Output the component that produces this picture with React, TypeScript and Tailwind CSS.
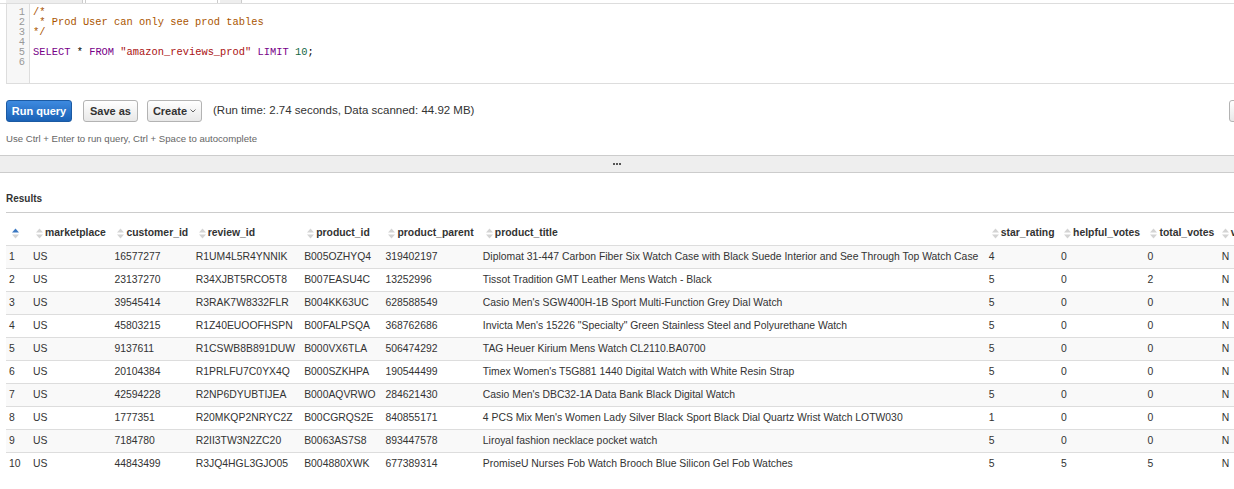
import React from "react";

const mono = { fontFamily: '"Liberation Mono", "DejaVu Sans Mono", monospace' };

const columns = [
  { key: "n", label: "", w: "w-[24px]" },
  { key: "marketplace", label: "marketplace", w: "w-[81px]" },
  { key: "customer_id", label: "customer_id", w: "w-[81px]" },
  { key: "review_id", label: "review_id", w: "w-[108px]" },
  { key: "product_id", label: "product_id", w: "w-[81px]" },
  { key: "product_parent", label: "product_parent", w: "w-[97px]" },
  { key: "product_title", label: "product_title", w: "w-[504px]" },
  { key: "star_rating", label: "star_rating", w: "w-[72px]" },
  { key: "helpful_votes", label: "helpful_votes", w: "w-[86px]" },
  { key: "total_votes", label: "total_votes", w: "w-[71px]" },
  { key: "vine", label: "vine", w: "w-[60px]" },
];

const rows = [
  ["1", "US", "16577277", "R1UM4L5R4YNNIK", "B005OZHYQ4", "319402197", "Diplomat 31-447 Carbon Fiber Six Watch Case with Black Suede Interior and See Through Top Watch Case", "4", "0", "0", "N"],
  ["2", "US", "23137270", "R34XJBT5RCO5T8", "B007EASU4C", "13252996", "Tissot Tradition GMT Leather Mens Watch - Black", "5", "0", "2", "N"],
  ["3", "US", "39545414", "R3RAK7W8332FLR", "B004KK63UC", "628588549", "Casio Men's SGW400H-1B Sport Multi-Function Grey Dial Watch", "5", "0", "0", "N"],
  ["4", "US", "45803215", "R1Z40EUOOFHSPN", "B00FALPSQA", "368762686", 'Invicta Men\'s 15226 "Specialty" Green Stainless Steel and Polyurethane Watch', "5", "0", "0", "N"],
  ["5", "US", "9137611", "R1CSWB8B891DUW", "B000VX6TLA", "506474292", "TAG Heuer Kirium Mens Watch CL2110.BA0700", "5", "0", "0", "N"],
  ["6", "US", "20104384", "R1PRLFU7C0YX4Q", "B000SZKHPA", "190544499", "Timex Women's T5G881 1440 Digital Watch with White Resin Strap", "5", "0", "0", "N"],
  ["7", "US", "42594228", "R2NP6DYUBTIJEA", "B000AQVRWO", "284621430", "Casio Men's DBC32-1A Data Bank Black Digital Watch", "5", "0", "0", "N"],
  ["8", "US", "1777351", "R20MKQP2NRYC2Z", "B00CGRQS2E", "840855171", "4 PCS Mix Men's Women Lady Silver Black Sport Black Dial Quartz Wrist Watch LOTW030", "1", "0", "0", "N"],
  ["9", "US", "7184780", "R2II3TW3N2ZC20", "B0063AS7S8", "893447578", "Liroyal fashion necklace pocket watch", "5", "0", "0", "N"],
  ["10", "US", "44843499", "R3JQ4HGL3GJO05", "B004880XWK", "677389314", "PromiseU Nurses Fob Watch Brooch Blue Silicon Gel Fob Watches", "5", "5", "5", "N"],
];

function SortIcon({ active }: { active?: boolean }) {
  return (
    <svg width="7" height="11" viewBox="0 0 7 11" className="shrink-0">
      <polygon points="0,4.5 3.5,0.5 7,4.5" fill={active ? "#3b78c2" : "#d4d4d4"} />
      <polygon points="0,6.5 3.5,10.5 7,6.5" fill="#d4d4d4" />
    </svg>
  );
}

function CodeEditor() {
  const lines: React.ReactNode[] = [
    <span className="text-[#aa5500]">/*</span>,
    <span className="text-[#aa5500]"> * Prod User can only see prod tables</span>,
    <span className="text-[#aa5500]">*/</span>,
    <span> </span>,
    <span>
      <span className="text-[#770088]">SELECT</span> * <span className="text-[#770088]">FROM</span>{" "}
      <span className="text-[#aa1111]">"amazon_reviews_prod"</span>{" "}
      <span className="text-[#770088]">LIMIT</span> <span className="text-[#116644]">10</span>;
    </span>,
    <span> </span>,
  ];
  return (
    <div className="ml-[6px] flex h-[80px] border-b border-l border-[#dddddd] bg-white" style={mono}>
      <div className="w-[23px] shrink-0 border-r border-[#dddddd] bg-[#f7f7f7] pt-[3px] pr-[4px] text-right text-[10.4px] leading-[10px] text-[#999999]">
        {lines.map((_, i) => (
          <div key={i}>{i + 1}</div>
        ))}
      </div>
      <div className="pt-[3px] pl-[3px] text-[10.4px] leading-[10px] whitespace-pre text-black">
        {lines.map((l, i) => (
          <div key={i}>{l}</div>
        ))}
      </div>
    </div>
  );
}

export default function App() {
  return (
    <div
      className="h-[489px] w-[1234px] overflow-hidden bg-white text-[#333333]"
      style={{ fontFamily: '"Liberation Sans", Arial, sans-serif' }}
    >
      {/* tab strip */}
      <div className="flex h-[4px] border-b border-[#dddddd] pl-[6px]">
        <div className="w-[77px] bg-[#eeeeee] border-r border-[#cccccc]" />
        <div className="ml-[2px] w-[133px] border-x border-[#cccccc] bg-white" />
        <div className="ml-[2px] w-[22px] bg-[#eeeeee] border-r border-[#cccccc]" />
      </div>

      <CodeEditor />

      {/* toolbar */}
      <div className="mt-[16px] flex h-[22px] items-center pl-[6px]">
        <button className="h-[22px] w-[66px] rounded-[3px] border border-[#1b5aa3] bg-gradient-to-b from-[#3d8ae0] to-[#1a62b6] text-[11px] font-bold text-white">
          Run query
        </button>
        <button className="ml-[11px] h-[22px] w-[55px] rounded-[3px] border border-[#b3b3b3] bg-gradient-to-b from-white to-[#e8e8e8] text-[11px] font-bold text-[#333333]">
          Save as
        </button>
        <button className="ml-[9px] flex h-[22px] w-[55px] items-center justify-center gap-[3px] rounded-[3px] border border-[#b3b3b3] bg-gradient-to-b from-white to-[#e8e8e8] text-[11px] font-bold text-[#333333]">
          Create
          <svg width="6" height="4" viewBox="0 0 6 4">
            <polyline points="0.5,0.5 3,3 5.5,0.5" fill="none" stroke="#555" strokeWidth="0.9" />
          </svg>
        </button>
        <span className="ml-[11px] text-[11.5px]">(Run time: 2.74 seconds, Data scanned: 44.92 MB)</span>
        <div className="ml-auto mr-[-36px] h-[22px] w-[41px] rounded-[3px] border border-[#b3b3b3] bg-gradient-to-b from-white to-[#e8e8e8]" />
      </div>

      <div className="mt-[11px] pl-[6px] text-[9.6px] leading-[12px] text-[#666666]">
        Use Ctrl + Enter to run query, Ctrl + Space to autocomplete
      </div>

      {/* splitter */}
      <div className="mt-[10px] flex h-[18px] items-center justify-center gap-[1px] border-y border-[#cccccc] bg-[#eeeeee]">
        <span className="h-[2px] w-[2px] bg-[#555555]" />
        <span className="h-[2px] w-[2px] bg-[#555555]" />
        <span className="h-[2px] w-[2px] bg-[#555555]" />
      </div>

      {/* results */}
      <div className="pl-[6px]">
        <div className="mt-[19px] border-b border-[#cccccc] pb-[6px] text-[10px] leading-[14px] font-bold">Results</div>
        <table className="mt-[9px] w-[1270px] table-fixed border-collapse text-[10.4px]">
          <colgroup>
            {columns.map((c) => (
              <col key={c.key} className={c.w} />
            ))}
          </colgroup>
          <thead>
            <tr className="h-[23px]">
              {columns.map((c, i) => (
                <th key={c.key} className="pl-[6px] text-left font-bold">
                  <div className="flex items-center gap-[2px] whitespace-nowrap">
                    <SortIcon active={i === 0} />
                    {c.label && <span>{c.label}</span>}
                  </div>
                </th>
              ))}
            </tr>
          </thead>
          <tbody>
            {rows.map((r, ri) => (
              <tr key={ri} className={`h-[23px] border-t border-[#dddddd] ${ri % 2 === 0 ? "bg-[#f9f9f9]" : "bg-white"}`}>
                {r.map((v, ci) => (
                  <td key={ci} className={`whitespace-nowrap ${ci === 10 ? "pl-[6px]" : "pl-[3px]"}`}>
                    {v}
                  </td>
                ))}
              </tr>
            ))}
          </tbody>
        </table>
      </div>
    </div>
  );
}
